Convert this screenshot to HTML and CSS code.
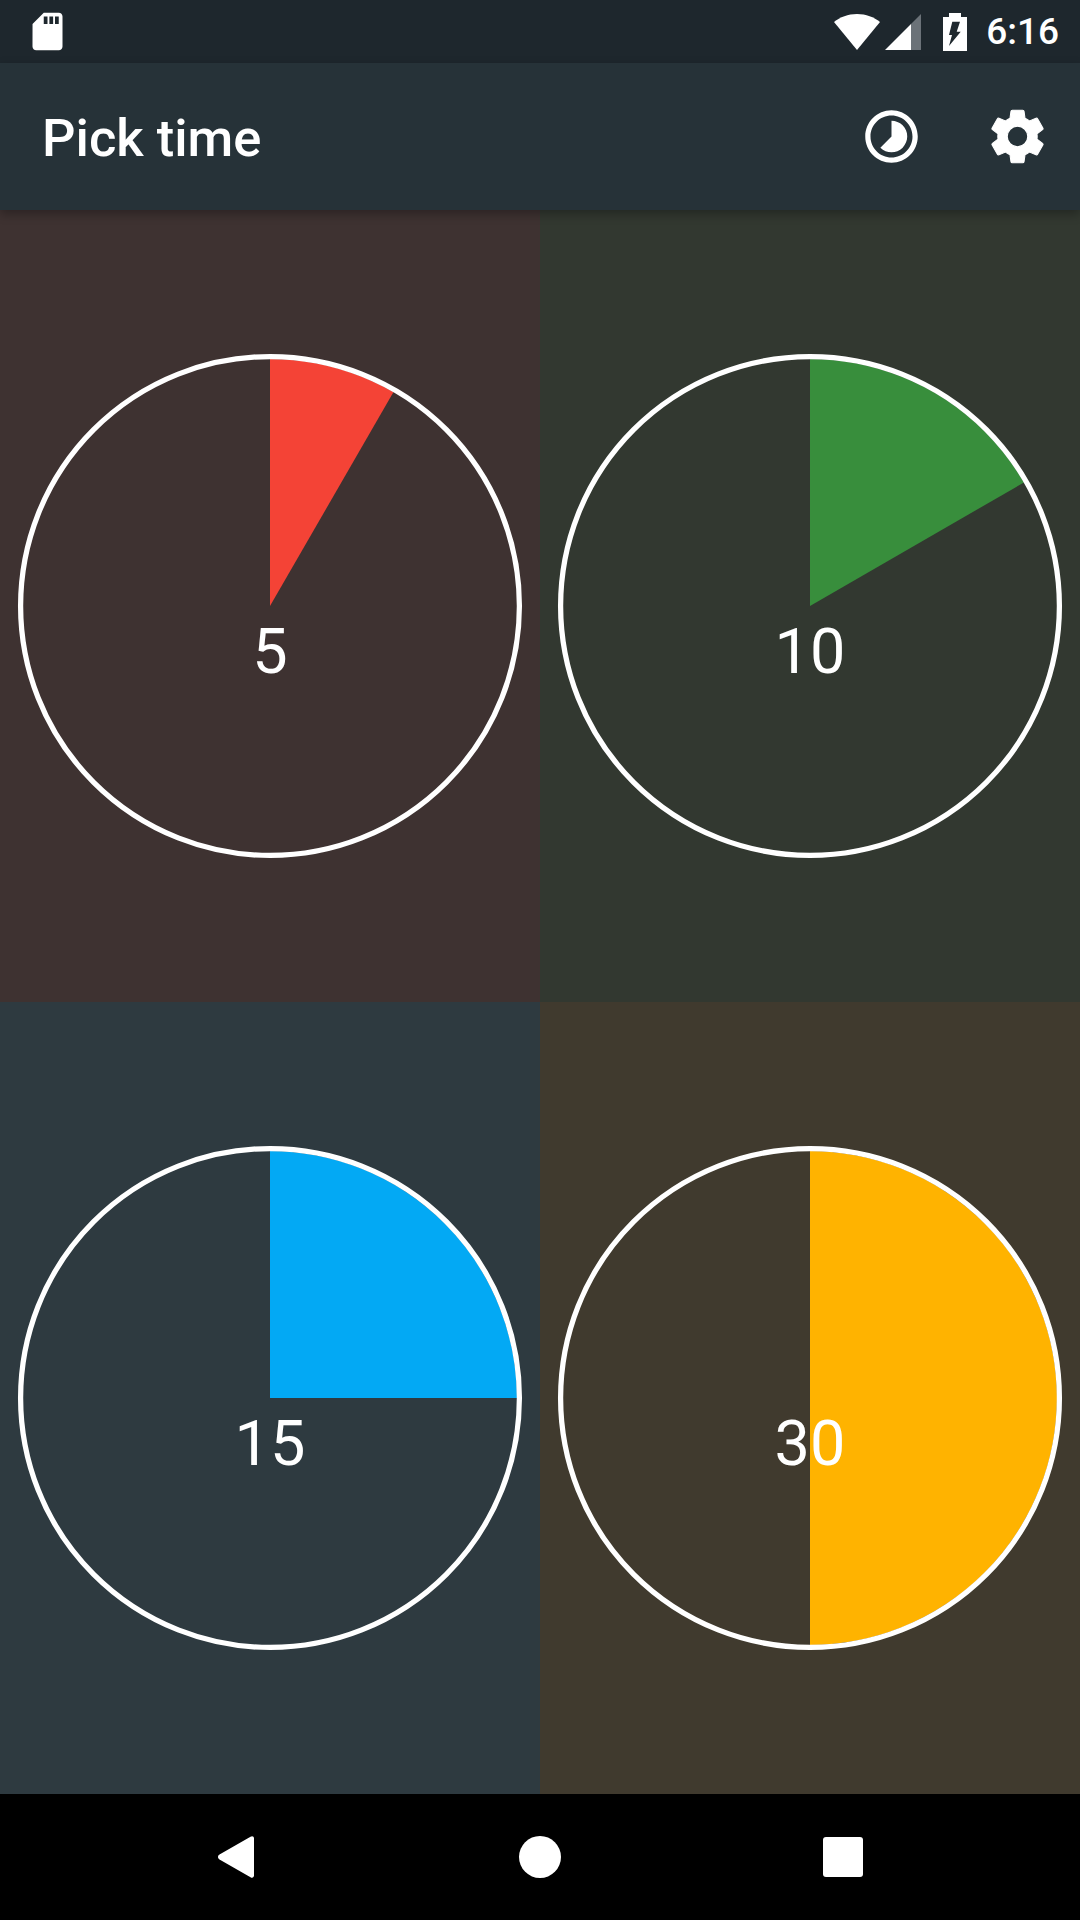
FILE: index.html
```html
<!DOCTYPE html>
<html lang="en">

<head>
    <meta charset="UTF-8">
    <meta name="viewport" content="width=device-width, initial-scale=1.0">
    <title>Pick time</title>
    <link rel="stylesheet" href="styles.css">
</head>

<body>

    <div class="status-bar">
        <svg class="icon-sd" viewBox="0 0 24 24">
            <path d="M18 2h-8L4.02 8 4 20c0 1.1.9 2 2 2h12c1.1 0 2-.9 2-2V4c0-1.1-.9-2-2-2zm-6 6h-2V4h2v4zm3 0h-2V4h2v4zm3 0h-2V4h2v4z" />
        </svg>
        <div class="status-right">
            <svg class="icon-wifi" viewBox="0 0 46 36">
                <path d="M23 36L0 8C6 3 14 0 23 0S40 3 46 8Z" />
            </svg>
            <svg class="icon-signal" viewBox="0 0 36 36">
                <path d="M0 36L26 10V36Z" />
                <path class="dim" d="M26 10L36 0V36H26Z" />
            </svg>
            <svg class="icon-battery" viewBox="0 0 24 38">
                <path fill-rule="evenodd" d="M0 4H6V0H18V4H24V38H0ZM9.3 8.7H17L13.7 18.7H17.7L6 33L9 22H6Z" />
            </svg>
            <span class="clock-time">6:16</span>
        </div>
    </div>

    <div class="app-bar">
        <h1>Pick time</h1>
        <svg class="icon-action icon-history" viewBox="0 0 24 24">
            <path d="M16.24 7.76C15.07 6.59 13.54 6 12 6v6l-4.24 4.24c2.34 2.34 6.14 2.34 8.49 0 2.34-2.34 2.34-6.14-.01-8.48zM12 2C6.48 2 2 6.48 2 12s4.48 10 10 10 10-4.48 10-10S17.52 2 12 2zm0 18c-4.42 0-8-3.58-8-8s3.58-8 8-8 8 3.58 8 8-3.58 8-8 8z" />
        </svg>
        <svg class="icon-action icon-gear" viewBox="0 0 24 24">
            <path d="M19.43 12.98c.04-.32.07-.64.07-.98s-.03-.66-.07-.98l2.11-1.65c.19-.15.24-.42.12-.64l-2-3.46c-.12-.22-.39-.3-.61-.22l-2.49 1c-.52-.4-1.08-.73-1.69-.98l-.38-2.65C14.46 2.18 14.25 2 14 2h-4c-.25 0-.46.18-.49.42l-.38 2.65c-.61.25-1.17.59-1.69.98l-2.49-1c-.23-.09-.49 0-.61.22l-2 3.46c-.13.22-.07.49.12.64l2.11 1.65c-.04.32-.07.65-.07.98s.03.66.07.98l-2.11 1.65c-.19.15-.24.42-.12.64l2 3.46c.12.22.39.3.61.22l2.49-1c.52.4 1.08.73 1.69.98l.38 2.65c.03.24.24.42.49.42h4c.25 0 .46-.18.49-.42l.38-2.65c.61-.25 1.17-.59 1.69-.98l2.49 1c.23.09.49 0 .61-.22l2-3.46c.12-.22.07-.49-.12-.64l-2.11-1.65zM12 15.9a3.9 3.9 0 1 1 0-7.8 3.9 3.9 0 0 1 0 7.8z" />
        </svg>
    </div>

    <div class="timer-grid">
        <div class="timer-cell cell-red">
            <div class="dial">
                <svg viewBox="0 0 510 510">
                    <path class="slice" d="M255 255V8A247 247 0 0 1 378.5 41.1Z" />
                    <circle class="ring" cx="255" cy="255" r="249.4" />
                </svg>
                <span class="dial-label">5</span>
            </div>
        </div>
        <div class="timer-cell cell-green">
            <div class="dial">
                <svg viewBox="0 0 510 510">
                    <path class="slice" d="M255 255V8A247 247 0 0 1 468.9 131.5Z" />
                    <circle class="ring" cx="255" cy="255" r="249.4" />
                </svg>
                <span class="dial-label">10</span>
            </div>
        </div>
        <div class="timer-cell cell-blue">
            <div class="dial">
                <svg viewBox="0 0 510 510">
                    <path class="slice" d="M255 255V8A247 247 0 0 1 502 255Z" />
                    <circle class="ring" cx="255" cy="255" r="249.4" />
                </svg>
                <span class="dial-label">15</span>
            </div>
        </div>
        <div class="timer-cell cell-amber">
            <div class="dial">
                <svg viewBox="0 0 510 510">
                    <path class="slice" d="M255 255V8A247 247 0 0 1 255 502Z" />
                    <circle class="ring" cx="255" cy="255" r="249.4" />
                </svg>
                <span class="dial-label">30</span>
            </div>
        </div>
    </div>

    <div class="nav-bar">
        <svg class="nav-back" viewBox="0 0 36 42">
            <path d="M32.5 0.8C34.3-0.4 36 0.6 36 2.4V39.6C36 41.4 34.3 42.4 32.5 41.2L1.5 23.4C-0.5 22.3-0.5 19.7 1.5 18.6Z" />
        </svg>
        <div class="nav-home"></div>
        <div class="nav-recent"></div>
    </div>

</body>

</html>
```

FILE: styles.css
```css
* {
    margin: 0;
    padding: 0;
    box-sizing: border-box;
}

body {
    width: 1080px;
    height: 1920px;
    display: flex;
    flex-direction: column;
    font-family: 'Roboto', sans-serif;
    color: white;
    background-color: #000;
    overflow: hidden;
}

svg {
    display: block;
    fill: white;
}

.status-bar {
    height: 63px;
    flex-shrink: 0;
    display: flex;
    align-items: center;
    justify-content: space-between;
    padding: 0 21px 0 25px;
    background-color: #1e272d;
}

.icon-sd {
    width: 45px;
    height: 45px;
}

.status-right {
    display: flex;
    align-items: center;
}

.icon-wifi {
    width: 46px;
    height: 36px;
    margin-right: 5px;
}

.icon-signal {
    width: 36px;
    height: 36px;
    margin-right: 22px;
}

.icon-signal .dim {
    fill: #6b7278;
}

.icon-battery {
    width: 24px;
    height: 38px;
    margin-right: 19px;
}

.clock-time {
    font-size: 37px;
    font-weight: 500;
    line-height: 63px;
}

.app-bar {
    height: 147px;
    flex-shrink: 0;
    display: flex;
    align-items: center;
    padding: 0 31px 0 42px;
    background-color: #263238;
    box-shadow: 0 4px 10px rgba(0, 0, 0, 0.3);
    position: relative;
    z-index: 1;
}

.app-bar h1 {
    flex: 1;
    padding-top: 3px;
    font-size: 52.5px;
    font-weight: 500;
}

.icon-action {
    width: 63px;
    height: 63px;
}

.icon-history {
    margin-right: 63px;
}

.icon-gear path {
    stroke: white;
    stroke-width: 0.4;
}

.timer-grid {
    flex: 1;
    display: grid;
    grid-template-columns: 1fr 1fr;
    grid-template-rows: 1fr 1fr;
}

.timer-cell {
    display: flex;
    align-items: center;
    justify-content: center;
}

.cell-red {
    background-color: #3e3231;
}

.cell-green {
    background-color: #323830;
}

.cell-blue {
    background-color: #2e3a40;
}

.cell-amber {
    background-color: #403a2e;
}

.dial {
    width: 510px;
    height: 510px;
    position: relative;
}

.ring {
    fill: none;
    stroke: white;
    stroke-width: 5.25;
}

.cell-red .slice {
    fill: #f44336;
}

.cell-green .slice {
    fill: #388e3c;
}

.cell-blue .slice {
    fill: #03a9f4;
}

.cell-amber .slice {
    fill: #ffb300;
}

.dial-label {
    position: absolute;
    left: 0;
    right: 0;
    top: 264px;
    text-align: center;
    font-size: 63px;
    line-height: 74px;
}

.nav-bar {
    height: 126px;
    flex-shrink: 0;
    display: flex;
    align-items: center;
    background-color: #000;
    padding: 0 217px 0 218px;
    justify-content: space-between;
}

.nav-back {
    width: 36px;
    height: 42px;
    margin-right: 3px;
}

.nav-home {
    width: 42px;
    height: 42px;
    border-radius: 50%;
    background-color: white;
}

.nav-recent {
    width: 40px;
    height: 40px;
    border-radius: 3px;
    background-color: white;
}
```
